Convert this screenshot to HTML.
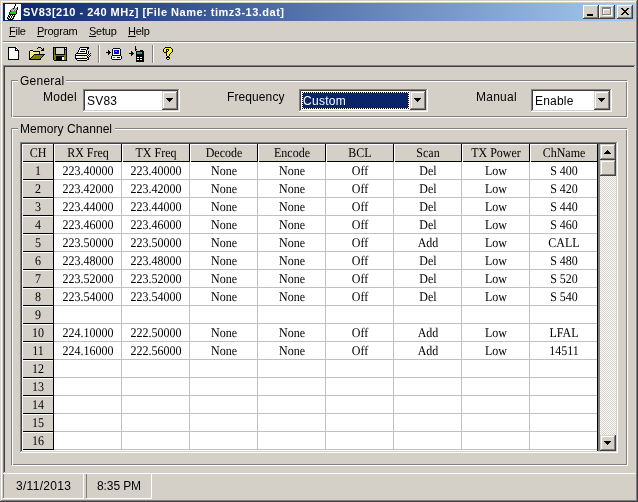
<!DOCTYPE html>
<html><head><meta charset="utf-8"><title>SV83</title><style>
html,body{margin:0;padding:0}
body{width:638px;height:502px;overflow:hidden;background:#D4D0C8;position:relative;font-family:"Liberation Sans",sans-serif}
.a{position:absolute;box-sizing:border-box}
.t{white-space:pre;-webkit-font-smoothing:antialiased;will-change:transform}
svg.a{overflow:visible}
</style></head><body>
<div class="a" style="left:0px;top:0px;width:638px;height:1px;background:#D4D0C8;"></div>
<div class="a" style="left:0px;top:0px;width:1px;height:502px;background:#D4D0C8;"></div>
<div class="a" style="left:1px;top:1px;width:636px;height:1px;background:#FFFFFF;"></div>
<div class="a" style="left:1px;top:1px;width:1px;height:500px;background:#FFFFFF;"></div>
<div class="a" style="left:0px;top:501px;width:638px;height:1px;background:#404040;"></div>
<div class="a" style="left:637px;top:0px;width:1px;height:502px;background:#404040;"></div>
<div class="a" style="left:1px;top:500px;width:636px;height:1px;background:#808080;"></div>
<div class="a" style="left:636px;top:1px;width:1px;height:500px;background:#808080;"></div>
<div class="a" style="left:3px;top:3px;width:632px;height:18px;background:linear-gradient(to right,#0A246A,#A6CAF0);"></div>
<div class="a t" style="left:23px;top:7px;font-family:'Liberation Sans',sans-serif;font-size:11px;line-height:11px;font-weight:bold;color:#fff;letter-spacing:0.5px">SV83[210 - 240 MHz] [File Name: timz3-13.dat]</div>
<div class="a" style="left:583px;top:5px;width:16px;height:14px;background:#D4D0C8;"></div>
<div class="a" style="left:583px;top:5px;width:16px;height:1px;background:#FFFFFF;"></div>
<div class="a" style="left:583px;top:5px;width:1px;height:14px;background:#FFFFFF;"></div>
<div class="a" style="left:584px;top:17px;width:14px;height:1px;background:#808080;"></div>
<div class="a" style="left:597px;top:6px;width:1px;height:12px;background:#808080;"></div>
<div class="a" style="left:583px;top:18px;width:16px;height:1px;background:#404040;"></div>
<div class="a" style="left:598px;top:5px;width:1px;height:14px;background:#404040;"></div>
<div class="a" style="left:599px;top:5px;width:16px;height:14px;background:#D4D0C8;"></div>
<div class="a" style="left:599px;top:5px;width:16px;height:1px;background:#FFFFFF;"></div>
<div class="a" style="left:599px;top:5px;width:1px;height:14px;background:#FFFFFF;"></div>
<div class="a" style="left:600px;top:17px;width:14px;height:1px;background:#808080;"></div>
<div class="a" style="left:613px;top:6px;width:1px;height:12px;background:#808080;"></div>
<div class="a" style="left:599px;top:18px;width:16px;height:1px;background:#404040;"></div>
<div class="a" style="left:614px;top:5px;width:1px;height:14px;background:#404040;"></div>
<div class="a" style="left:617px;top:5px;width:16px;height:14px;background:#D4D0C8;"></div>
<div class="a" style="left:617px;top:5px;width:16px;height:1px;background:#FFFFFF;"></div>
<div class="a" style="left:617px;top:5px;width:1px;height:14px;background:#FFFFFF;"></div>
<div class="a" style="left:618px;top:17px;width:14px;height:1px;background:#808080;"></div>
<div class="a" style="left:631px;top:6px;width:1px;height:12px;background:#808080;"></div>
<div class="a" style="left:617px;top:18px;width:16px;height:1px;background:#404040;"></div>
<div class="a" style="left:632px;top:5px;width:1px;height:14px;background:#404040;"></div>
<svg class="a" style="left:583px;top:5px" width="16" height="14" viewBox="0 0 16 14" shape-rendering="crispEdges"><rect x="4" y="9" width="6" height="2" fill="#000"/></svg>
<svg class="a" style="left:599px;top:5px" width="16" height="14" viewBox="0 0 16 14" shape-rendering="crispEdges"><path d="M4 3h9v8h-9z M5 5v5h7v-5z" fill="#fff" fill-rule="evenodd"/><path d="M3 2h9v8h-9z M4 4v5h7v-5z" fill="#808080" fill-rule="evenodd"/></svg>
<svg class="a" style="left:617px;top:5px" width="16" height="14" viewBox="0 0 16 14" shape-rendering="crispEdges"><path d="M4 3h2v1h1v1h2v-1h1v-1h2v1h-1v1h-1v1h-1v1h1v1h1v1h1v1h-2v-1h-1v-1h-2v1h-1v1h-2v-1h1v-1h1v-1h1v-1h-1v-1h-1v-1h-1z" fill="#000"/></svg>
<div class="a t" style="left:9px;top:26px;font-family:'Liberation Sans',sans-serif;font-size:11px;line-height:11px;font-weight:normal;color:#000;letter-spacing:-0.25px"><u>F</u>ile</div>
<div class="a t" style="left:37px;top:26px;font-family:'Liberation Sans',sans-serif;font-size:11px;line-height:11px;font-weight:normal;color:#000;letter-spacing:-0.25px"><u>P</u>rogram</div>
<div class="a t" style="left:89px;top:26px;font-family:'Liberation Sans',sans-serif;font-size:11px;line-height:11px;font-weight:normal;color:#000;letter-spacing:-0.25px"><u>S</u>etup</div>
<div class="a t" style="left:128px;top:26px;font-family:'Liberation Sans',sans-serif;font-size:11px;line-height:11px;font-weight:normal;color:#000;letter-spacing:-0.25px"><u>H</u>elp</div>
<div class="a" style="left:3px;top:41px;width:632px;height:1px;background:#808080;"></div>
<div class="a" style="left:3px;top:42px;width:632px;height:1px;background:#FFFFFF;"></div>
<div class="a" style="left:98px;top:45px;width:1px;height:18px;background:#808080;"></div>
<div class="a" style="left:99px;top:45px;width:1px;height:18px;background:#FFFFFF;"></div>
<div class="a" style="left:152px;top:45px;width:1px;height:18px;background:#808080;"></div>
<div class="a" style="left:153px;top:45px;width:1px;height:18px;background:#FFFFFF;"></div>
<div class="a" style="left:3px;top:65px;width:633px;height:1px;background:#808080;"></div>
<div class="a" style="left:3px;top:65px;width:1px;height:409px;background:#808080;"></div>
<div class="a" style="left:4px;top:66px;width:631px;height:1px;background:#404040;"></div>
<div class="a" style="left:4px;top:66px;width:1px;height:407px;background:#404040;"></div>
<div class="a" style="left:4px;top:472px;width:631px;height:1px;background:#D4D0C8;"></div>
<div class="a" style="left:634px;top:66px;width:1px;height:407px;background:#D4D0C8;"></div>
<div class="a" style="left:3px;top:473px;width:633px;height:1px;background:#FFFFFF;"></div>
<div class="a" style="left:635px;top:65px;width:1px;height:409px;background:#FFFFFF;"></div>
<div class="a" style="left:635px;top:65px;width:1px;height:409px;background:#D8D8D0;"></div>
<div class="a" style="left:11px;top:80px;width:616px;height:1px;background:#808080;"></div>
<div class="a" style="left:11px;top:80px;width:1px;height:37px;background:#808080;"></div>
<div class="a" style="left:11px;top:116px;width:616px;height:1px;background:#808080;"></div>
<div class="a" style="left:626px;top:80px;width:1px;height:37px;background:#808080;"></div>
<div class="a" style="left:12px;top:81px;width:616px;height:1px;background:#FFFFFF;"></div>
<div class="a" style="left:12px;top:81px;width:1px;height:37px;background:#FFFFFF;"></div>
<div class="a" style="left:12px;top:117px;width:616px;height:1px;background:#FFFFFF;"></div>
<div class="a" style="left:627px;top:81px;width:1px;height:37px;background:#FFFFFF;"></div>
<div class="a" style="left:18px;top:80px;width:48px;height:2px;background:#D4D0C8;"></div>
<div class="a" style="left:11px;top:80px;width:1px;height:37px;background:#808080;"></div>
<div class="a t" style="left:20px;top:75px;font-family:'Liberation Sans',sans-serif;font-size:12px;line-height:12px;font-weight:normal;color:#000;letter-spacing:0.25px">General</div>
<div class="a" style="left:11px;top:128px;width:616px;height:1px;background:#808080;"></div>
<div class="a" style="left:11px;top:128px;width:1px;height:337px;background:#808080;"></div>
<div class="a" style="left:11px;top:464px;width:616px;height:1px;background:#808080;"></div>
<div class="a" style="left:626px;top:128px;width:1px;height:337px;background:#808080;"></div>
<div class="a" style="left:12px;top:129px;width:616px;height:1px;background:#FFFFFF;"></div>
<div class="a" style="left:12px;top:129px;width:1px;height:337px;background:#FFFFFF;"></div>
<div class="a" style="left:12px;top:465px;width:616px;height:1px;background:#FFFFFF;"></div>
<div class="a" style="left:627px;top:129px;width:1px;height:337px;background:#FFFFFF;"></div>
<div class="a" style="left:18px;top:128px;width:97px;height:2px;background:#D4D0C8;"></div>
<div class="a" style="left:11px;top:128px;width:1px;height:337px;background:#808080;"></div>
<div class="a t" style="left:20px;top:123px;font-family:'Liberation Sans',sans-serif;font-size:12px;line-height:12px;font-weight:normal;color:#000;letter-spacing:0.05px">Memory Channel</div>
<div class="a t" style="left:43px;top:91px;font-family:'Liberation Sans',sans-serif;font-size:12px;line-height:12px;font-weight:normal;color:#000;letter-spacing:0.25px">Model</div>
<div class="a" style="left:83px;top:89px;width:97px;height:1px;background:#808080;"></div>
<div class="a" style="left:83px;top:89px;width:1px;height:23px;background:#808080;"></div>
<div class="a" style="left:84px;top:90px;width:95px;height:1px;background:#404040;"></div>
<div class="a" style="left:84px;top:90px;width:1px;height:21px;background:#404040;"></div>
<div class="a" style="left:84px;top:110px;width:95px;height:1px;background:#D4D0C8;"></div>
<div class="a" style="left:178px;top:90px;width:1px;height:21px;background:#D4D0C8;"></div>
<div class="a" style="left:83px;top:111px;width:97px;height:1px;background:#FFFFFF;"></div>
<div class="a" style="left:179px;top:89px;width:1px;height:23px;background:#FFFFFF;"></div>
<div class="a" style="left:85px;top:91px;width:93px;height:19px;background:#FFFFFF;"></div>
<div class="a" style="left:162px;top:91px;width:16px;height:19px;background:#D4D0C8;"></div>
<div class="a" style="left:162px;top:91px;width:16px;height:1px;background:#D4D0C8;"></div>
<div class="a" style="left:162px;top:91px;width:1px;height:19px;background:#D4D0C8;"></div>
<div class="a" style="left:163px;top:92px;width:14px;height:1px;background:#FFFFFF;"></div>
<div class="a" style="left:163px;top:92px;width:1px;height:17px;background:#FFFFFF;"></div>
<div class="a" style="left:163px;top:108px;width:14px;height:1px;background:#808080;"></div>
<div class="a" style="left:176px;top:92px;width:1px;height:17px;background:#808080;"></div>
<div class="a" style="left:162px;top:109px;width:16px;height:1px;background:#404040;"></div>
<div class="a" style="left:177px;top:91px;width:1px;height:19px;background:#404040;"></div>
<svg class="a" style="left:162px;top:91px" width="16" height="19" viewBox="0 0 16 19" shape-rendering="crispEdges"><path d="M4 7h7v1h-1v1h-1v1h-1v1h-1v-1h-1v-1h-1v-1h-1z" fill="#000"/></svg>
<div class="a t" style="left:87px;top:95px;font-family:'Liberation Sans',sans-serif;font-size:12px;line-height:12px;font-weight:normal;color:#000;letter-spacing:0.2px">SV83</div>
<div class="a t" style="left:227px;top:91px;font-family:'Liberation Sans',sans-serif;font-size:12px;line-height:12px;font-weight:normal;color:#000;letter-spacing:0.1px">Frequency</div>
<div class="a" style="left:299px;top:89px;width:129px;height:1px;background:#808080;"></div>
<div class="a" style="left:299px;top:89px;width:1px;height:23px;background:#808080;"></div>
<div class="a" style="left:300px;top:90px;width:127px;height:1px;background:#404040;"></div>
<div class="a" style="left:300px;top:90px;width:1px;height:21px;background:#404040;"></div>
<div class="a" style="left:300px;top:110px;width:127px;height:1px;background:#D4D0C8;"></div>
<div class="a" style="left:426px;top:90px;width:1px;height:21px;background:#D4D0C8;"></div>
<div class="a" style="left:299px;top:111px;width:129px;height:1px;background:#FFFFFF;"></div>
<div class="a" style="left:427px;top:89px;width:1px;height:23px;background:#FFFFFF;"></div>
<div class="a" style="left:301px;top:91px;width:125px;height:19px;background:#FFFFFF;"></div>
<div class="a" style="left:410px;top:91px;width:16px;height:19px;background:#D4D0C8;"></div>
<div class="a" style="left:410px;top:91px;width:16px;height:1px;background:#D4D0C8;"></div>
<div class="a" style="left:410px;top:91px;width:1px;height:19px;background:#D4D0C8;"></div>
<div class="a" style="left:411px;top:92px;width:14px;height:1px;background:#FFFFFF;"></div>
<div class="a" style="left:411px;top:92px;width:1px;height:17px;background:#FFFFFF;"></div>
<div class="a" style="left:411px;top:108px;width:14px;height:1px;background:#808080;"></div>
<div class="a" style="left:424px;top:92px;width:1px;height:17px;background:#808080;"></div>
<div class="a" style="left:410px;top:109px;width:16px;height:1px;background:#404040;"></div>
<div class="a" style="left:425px;top:91px;width:1px;height:19px;background:#404040;"></div>
<svg class="a" style="left:410px;top:91px" width="16" height="19" viewBox="0 0 16 19" shape-rendering="crispEdges"><path d="M4 7h7v1h-1v1h-1v1h-1v1h-1v-1h-1v-1h-1v-1h-1z" fill="#000"/></svg>
<div class="a" style="left:302px;top:92px;width:107px;height:17px;background:#0A246A;"></div>
<div class="a" style="left:302px;top:92px;width:107px;height:17px;border:1px solid #fff"></div>
<div class="a" style="left:302px;top:92px;width:107px;height:17px;border:1px dotted #000"></div>
<div class="a t" style="left:303px;top:95px;font-family:'Liberation Sans',sans-serif;font-size:12px;line-height:12px;font-weight:normal;color:#fff;letter-spacing:0.3px">Custom</div>
<div class="a t" style="left:476px;top:91px;font-family:'Liberation Sans',sans-serif;font-size:12px;line-height:12px;font-weight:normal;color:#000;letter-spacing:0.25px">Manual</div>
<div class="a" style="left:531px;top:89px;width:81px;height:1px;background:#808080;"></div>
<div class="a" style="left:531px;top:89px;width:1px;height:23px;background:#808080;"></div>
<div class="a" style="left:532px;top:90px;width:79px;height:1px;background:#404040;"></div>
<div class="a" style="left:532px;top:90px;width:1px;height:21px;background:#404040;"></div>
<div class="a" style="left:532px;top:110px;width:79px;height:1px;background:#D4D0C8;"></div>
<div class="a" style="left:610px;top:90px;width:1px;height:21px;background:#D4D0C8;"></div>
<div class="a" style="left:531px;top:111px;width:81px;height:1px;background:#FFFFFF;"></div>
<div class="a" style="left:611px;top:89px;width:1px;height:23px;background:#FFFFFF;"></div>
<div class="a" style="left:533px;top:91px;width:77px;height:19px;background:#FFFFFF;"></div>
<div class="a" style="left:594px;top:91px;width:16px;height:19px;background:#D4D0C8;"></div>
<div class="a" style="left:594px;top:91px;width:16px;height:1px;background:#D4D0C8;"></div>
<div class="a" style="left:594px;top:91px;width:1px;height:19px;background:#D4D0C8;"></div>
<div class="a" style="left:595px;top:92px;width:14px;height:1px;background:#FFFFFF;"></div>
<div class="a" style="left:595px;top:92px;width:1px;height:17px;background:#FFFFFF;"></div>
<div class="a" style="left:595px;top:108px;width:14px;height:1px;background:#808080;"></div>
<div class="a" style="left:608px;top:92px;width:1px;height:17px;background:#808080;"></div>
<div class="a" style="left:594px;top:109px;width:16px;height:1px;background:#404040;"></div>
<div class="a" style="left:609px;top:91px;width:1px;height:19px;background:#404040;"></div>
<svg class="a" style="left:594px;top:91px" width="16" height="19" viewBox="0 0 16 19" shape-rendering="crispEdges"><path d="M4 7h7v1h-1v1h-1v1h-1v1h-1v-1h-1v-1h-1v-1h-1z" fill="#000"/></svg>
<div class="a t" style="left:535px;top:95px;font-family:'Liberation Sans',sans-serif;font-size:12px;line-height:12px;font-weight:normal;color:#000;letter-spacing:0.2px">Enable</div>
<div class="a" style="left:20px;top:142px;width:598px;height:1px;background:#808080;"></div>
<div class="a" style="left:20px;top:142px;width:1px;height:311px;background:#808080;"></div>
<div class="a" style="left:21px;top:143px;width:596px;height:1px;background:#404040;"></div>
<div class="a" style="left:21px;top:143px;width:1px;height:309px;background:#404040;"></div>
<div class="a" style="left:21px;top:451px;width:596px;height:1px;background:#D4D0C8;"></div>
<div class="a" style="left:616px;top:143px;width:1px;height:309px;background:#D4D0C8;"></div>
<div class="a" style="left:20px;top:452px;width:598px;height:1px;background:#FFFFFF;"></div>
<div class="a" style="left:617px;top:142px;width:1px;height:311px;background:#FFFFFF;"></div>
<div class="a" style="left:22px;top:144px;width:594px;height:307px;background:#808080;"></div>
<div class="a" style="left:22px;top:450px;width:576px;height:1px;background:#FFFFFF;"></div>
<div class="a" style="left:22px;top:144px;width:32px;height:18px;background:#D4D0C8;"></div>
<div class="a" style="left:22px;top:144px;width:32px;height:1px;background:#FFFFFF;"></div>
<div class="a" style="left:22px;top:144px;width:1px;height:18px;background:#FFFFFF;"></div>
<div class="a" style="left:22px;top:161px;width:32px;height:1px;background:#000000;"></div>
<div class="a" style="left:53px;top:144px;width:1px;height:18px;background:#000000;"></div>
<div class="a" style="left:22px;top:161px;width:1px;height:1px;background:#FFFFFF;"></div>
<div class="a t" style="left:22px;top:147px;width:32px;text-align:center;font-family:'Liberation Serif',serif;font-size:12px;line-height:12px;color:#000;text-rendering:geometricPrecision;transform:scaleY(1.1);transform-origin:50% 10px">CH</div>
<div class="a" style="left:54px;top:144px;width:68px;height:18px;background:#D4D0C8;"></div>
<div class="a" style="left:54px;top:144px;width:68px;height:1px;background:#FFFFFF;"></div>
<div class="a" style="left:54px;top:144px;width:1px;height:18px;background:#FFFFFF;"></div>
<div class="a" style="left:54px;top:161px;width:68px;height:1px;background:#000000;"></div>
<div class="a" style="left:121px;top:144px;width:1px;height:18px;background:#000000;"></div>
<div class="a" style="left:54px;top:161px;width:1px;height:1px;background:#FFFFFF;"></div>
<div class="a t" style="left:54px;top:147px;width:68px;text-align:center;font-family:'Liberation Serif',serif;font-size:12px;line-height:12px;color:#000;text-rendering:geometricPrecision;transform:scaleY(1.1);transform-origin:50% 10px">RX Freq</div>
<div class="a" style="left:122px;top:144px;width:68px;height:18px;background:#D4D0C8;"></div>
<div class="a" style="left:122px;top:144px;width:68px;height:1px;background:#FFFFFF;"></div>
<div class="a" style="left:122px;top:144px;width:1px;height:18px;background:#FFFFFF;"></div>
<div class="a" style="left:122px;top:161px;width:68px;height:1px;background:#000000;"></div>
<div class="a" style="left:189px;top:144px;width:1px;height:18px;background:#000000;"></div>
<div class="a" style="left:122px;top:161px;width:1px;height:1px;background:#FFFFFF;"></div>
<div class="a t" style="left:122px;top:147px;width:68px;text-align:center;font-family:'Liberation Serif',serif;font-size:12px;line-height:12px;color:#000;text-rendering:geometricPrecision;transform:scaleY(1.1);transform-origin:50% 10px">TX Freq</div>
<div class="a" style="left:190px;top:144px;width:68px;height:18px;background:#D4D0C8;"></div>
<div class="a" style="left:190px;top:144px;width:68px;height:1px;background:#FFFFFF;"></div>
<div class="a" style="left:190px;top:144px;width:1px;height:18px;background:#FFFFFF;"></div>
<div class="a" style="left:190px;top:161px;width:68px;height:1px;background:#000000;"></div>
<div class="a" style="left:257px;top:144px;width:1px;height:18px;background:#000000;"></div>
<div class="a" style="left:190px;top:161px;width:1px;height:1px;background:#FFFFFF;"></div>
<div class="a t" style="left:190px;top:147px;width:68px;text-align:center;font-family:'Liberation Serif',serif;font-size:12px;line-height:12px;color:#000;text-rendering:geometricPrecision;transform:scaleY(1.1);transform-origin:50% 10px">Decode</div>
<div class="a" style="left:258px;top:144px;width:68px;height:18px;background:#D4D0C8;"></div>
<div class="a" style="left:258px;top:144px;width:68px;height:1px;background:#FFFFFF;"></div>
<div class="a" style="left:258px;top:144px;width:1px;height:18px;background:#FFFFFF;"></div>
<div class="a" style="left:258px;top:161px;width:68px;height:1px;background:#000000;"></div>
<div class="a" style="left:325px;top:144px;width:1px;height:18px;background:#000000;"></div>
<div class="a" style="left:258px;top:161px;width:1px;height:1px;background:#FFFFFF;"></div>
<div class="a t" style="left:258px;top:147px;width:68px;text-align:center;font-family:'Liberation Serif',serif;font-size:12px;line-height:12px;color:#000;text-rendering:geometricPrecision;transform:scaleY(1.1);transform-origin:50% 10px">Encode</div>
<div class="a" style="left:326px;top:144px;width:68px;height:18px;background:#D4D0C8;"></div>
<div class="a" style="left:326px;top:144px;width:68px;height:1px;background:#FFFFFF;"></div>
<div class="a" style="left:326px;top:144px;width:1px;height:18px;background:#FFFFFF;"></div>
<div class="a" style="left:326px;top:161px;width:68px;height:1px;background:#000000;"></div>
<div class="a" style="left:393px;top:144px;width:1px;height:18px;background:#000000;"></div>
<div class="a" style="left:326px;top:161px;width:1px;height:1px;background:#FFFFFF;"></div>
<div class="a t" style="left:326px;top:147px;width:68px;text-align:center;font-family:'Liberation Serif',serif;font-size:12px;line-height:12px;color:#000;text-rendering:geometricPrecision;transform:scaleY(1.1);transform-origin:50% 10px">BCL</div>
<div class="a" style="left:394px;top:144px;width:68px;height:18px;background:#D4D0C8;"></div>
<div class="a" style="left:394px;top:144px;width:68px;height:1px;background:#FFFFFF;"></div>
<div class="a" style="left:394px;top:144px;width:1px;height:18px;background:#FFFFFF;"></div>
<div class="a" style="left:394px;top:161px;width:68px;height:1px;background:#000000;"></div>
<div class="a" style="left:461px;top:144px;width:1px;height:18px;background:#000000;"></div>
<div class="a" style="left:394px;top:161px;width:1px;height:1px;background:#FFFFFF;"></div>
<div class="a t" style="left:394px;top:147px;width:68px;text-align:center;font-family:'Liberation Serif',serif;font-size:12px;line-height:12px;color:#000;text-rendering:geometricPrecision;transform:scaleY(1.1);transform-origin:50% 10px">Scan</div>
<div class="a" style="left:462px;top:144px;width:68px;height:18px;background:#D4D0C8;"></div>
<div class="a" style="left:462px;top:144px;width:68px;height:1px;background:#FFFFFF;"></div>
<div class="a" style="left:462px;top:144px;width:1px;height:18px;background:#FFFFFF;"></div>
<div class="a" style="left:462px;top:161px;width:68px;height:1px;background:#000000;"></div>
<div class="a" style="left:529px;top:144px;width:1px;height:18px;background:#000000;"></div>
<div class="a" style="left:462px;top:161px;width:1px;height:1px;background:#FFFFFF;"></div>
<div class="a t" style="left:462px;top:147px;width:68px;text-align:center;font-family:'Liberation Serif',serif;font-size:12px;line-height:12px;color:#000;text-rendering:geometricPrecision;transform:scaleY(1.1);transform-origin:50% 10px">TX Power</div>
<div class="a" style="left:530px;top:144px;width:68px;height:18px;background:#D4D0C8;"></div>
<div class="a" style="left:530px;top:144px;width:68px;height:1px;background:#FFFFFF;"></div>
<div class="a" style="left:530px;top:144px;width:1px;height:18px;background:#FFFFFF;"></div>
<div class="a" style="left:530px;top:161px;width:68px;height:1px;background:#000000;"></div>
<div class="a" style="left:597px;top:144px;width:1px;height:18px;background:#000000;"></div>
<div class="a" style="left:530px;top:161px;width:1px;height:1px;background:#FFFFFF;"></div>
<div class="a t" style="left:530px;top:147px;width:68px;text-align:center;font-family:'Liberation Serif',serif;font-size:12px;line-height:12px;color:#000;text-rendering:geometricPrecision;transform:scaleY(1.1);transform-origin:50% 10px">ChName</div>
<div class="a" style="left:54px;top:162px;width:544px;height:288px;background:#FFFFFF;"></div>
<div class="a" style="left:22px;top:162px;width:32px;height:18px;background:#D4D0C8;"></div>
<div class="a" style="left:22px;top:162px;width:32px;height:1px;background:#FFFFFF;"></div>
<div class="a" style="left:22px;top:162px;width:1px;height:18px;background:#FFFFFF;"></div>
<div class="a" style="left:22px;top:179px;width:32px;height:1px;background:#000000;"></div>
<div class="a" style="left:53px;top:162px;width:1px;height:18px;background:#000000;"></div>
<div class="a" style="left:22px;top:179px;width:1px;height:1px;background:#FFFFFF;"></div>
<div class="a t" style="left:22px;top:165px;width:32px;text-align:center;font-family:'Liberation Serif',serif;font-size:12px;line-height:12px;color:#000;text-rendering:geometricPrecision;transform:scaleY(1.1);transform-origin:50% 10px">1</div>
<div class="a" style="left:54px;top:179px;width:544px;height:1px;background:#C0C0C0;"></div>
<div class="a t" style="left:54px;top:165px;width:68px;text-align:center;font-family:'Liberation Serif',serif;font-size:12px;line-height:12px;color:#000;text-rendering:geometricPrecision;transform:scaleY(1.1);transform-origin:50% 10px">223.40000</div>
<div class="a t" style="left:122px;top:165px;width:68px;text-align:center;font-family:'Liberation Serif',serif;font-size:12px;line-height:12px;color:#000;text-rendering:geometricPrecision;transform:scaleY(1.1);transform-origin:50% 10px">223.40000</div>
<div class="a t" style="left:190px;top:165px;width:68px;text-align:center;font-family:'Liberation Serif',serif;font-size:12px;line-height:12px;color:#000;text-rendering:geometricPrecision;transform:scaleY(1.1);transform-origin:50% 10px">None</div>
<div class="a t" style="left:258px;top:165px;width:68px;text-align:center;font-family:'Liberation Serif',serif;font-size:12px;line-height:12px;color:#000;text-rendering:geometricPrecision;transform:scaleY(1.1);transform-origin:50% 10px">None</div>
<div class="a t" style="left:326px;top:165px;width:68px;text-align:center;font-family:'Liberation Serif',serif;font-size:12px;line-height:12px;color:#000;text-rendering:geometricPrecision;transform:scaleY(1.1);transform-origin:50% 10px">Off</div>
<div class="a t" style="left:394px;top:165px;width:68px;text-align:center;font-family:'Liberation Serif',serif;font-size:12px;line-height:12px;color:#000;text-rendering:geometricPrecision;transform:scaleY(1.1);transform-origin:50% 10px">Del</div>
<div class="a t" style="left:462px;top:165px;width:68px;text-align:center;font-family:'Liberation Serif',serif;font-size:12px;line-height:12px;color:#000;text-rendering:geometricPrecision;transform:scaleY(1.1);transform-origin:50% 10px">Low</div>
<div class="a t" style="left:530px;top:165px;width:68px;text-align:center;font-family:'Liberation Serif',serif;font-size:12px;line-height:12px;color:#000;text-rendering:geometricPrecision;transform:scaleY(1.1);transform-origin:50% 10px">S 400</div>
<div class="a" style="left:22px;top:180px;width:32px;height:18px;background:#D4D0C8;"></div>
<div class="a" style="left:22px;top:180px;width:32px;height:1px;background:#FFFFFF;"></div>
<div class="a" style="left:22px;top:180px;width:1px;height:18px;background:#FFFFFF;"></div>
<div class="a" style="left:22px;top:197px;width:32px;height:1px;background:#000000;"></div>
<div class="a" style="left:53px;top:180px;width:1px;height:18px;background:#000000;"></div>
<div class="a" style="left:22px;top:197px;width:1px;height:1px;background:#FFFFFF;"></div>
<div class="a t" style="left:22px;top:183px;width:32px;text-align:center;font-family:'Liberation Serif',serif;font-size:12px;line-height:12px;color:#000;text-rendering:geometricPrecision;transform:scaleY(1.1);transform-origin:50% 10px">2</div>
<div class="a" style="left:54px;top:197px;width:544px;height:1px;background:#C0C0C0;"></div>
<div class="a t" style="left:54px;top:183px;width:68px;text-align:center;font-family:'Liberation Serif',serif;font-size:12px;line-height:12px;color:#000;text-rendering:geometricPrecision;transform:scaleY(1.1);transform-origin:50% 10px">223.42000</div>
<div class="a t" style="left:122px;top:183px;width:68px;text-align:center;font-family:'Liberation Serif',serif;font-size:12px;line-height:12px;color:#000;text-rendering:geometricPrecision;transform:scaleY(1.1);transform-origin:50% 10px">223.42000</div>
<div class="a t" style="left:190px;top:183px;width:68px;text-align:center;font-family:'Liberation Serif',serif;font-size:12px;line-height:12px;color:#000;text-rendering:geometricPrecision;transform:scaleY(1.1);transform-origin:50% 10px">None</div>
<div class="a t" style="left:258px;top:183px;width:68px;text-align:center;font-family:'Liberation Serif',serif;font-size:12px;line-height:12px;color:#000;text-rendering:geometricPrecision;transform:scaleY(1.1);transform-origin:50% 10px">None</div>
<div class="a t" style="left:326px;top:183px;width:68px;text-align:center;font-family:'Liberation Serif',serif;font-size:12px;line-height:12px;color:#000;text-rendering:geometricPrecision;transform:scaleY(1.1);transform-origin:50% 10px">Off</div>
<div class="a t" style="left:394px;top:183px;width:68px;text-align:center;font-family:'Liberation Serif',serif;font-size:12px;line-height:12px;color:#000;text-rendering:geometricPrecision;transform:scaleY(1.1);transform-origin:50% 10px">Del</div>
<div class="a t" style="left:462px;top:183px;width:68px;text-align:center;font-family:'Liberation Serif',serif;font-size:12px;line-height:12px;color:#000;text-rendering:geometricPrecision;transform:scaleY(1.1);transform-origin:50% 10px">Low</div>
<div class="a t" style="left:530px;top:183px;width:68px;text-align:center;font-family:'Liberation Serif',serif;font-size:12px;line-height:12px;color:#000;text-rendering:geometricPrecision;transform:scaleY(1.1);transform-origin:50% 10px">S 420</div>
<div class="a" style="left:22px;top:198px;width:32px;height:18px;background:#D4D0C8;"></div>
<div class="a" style="left:22px;top:198px;width:32px;height:1px;background:#FFFFFF;"></div>
<div class="a" style="left:22px;top:198px;width:1px;height:18px;background:#FFFFFF;"></div>
<div class="a" style="left:22px;top:215px;width:32px;height:1px;background:#000000;"></div>
<div class="a" style="left:53px;top:198px;width:1px;height:18px;background:#000000;"></div>
<div class="a" style="left:22px;top:215px;width:1px;height:1px;background:#FFFFFF;"></div>
<div class="a t" style="left:22px;top:201px;width:32px;text-align:center;font-family:'Liberation Serif',serif;font-size:12px;line-height:12px;color:#000;text-rendering:geometricPrecision;transform:scaleY(1.1);transform-origin:50% 10px">3</div>
<div class="a" style="left:54px;top:215px;width:544px;height:1px;background:#C0C0C0;"></div>
<div class="a t" style="left:54px;top:201px;width:68px;text-align:center;font-family:'Liberation Serif',serif;font-size:12px;line-height:12px;color:#000;text-rendering:geometricPrecision;transform:scaleY(1.1);transform-origin:50% 10px">223.44000</div>
<div class="a t" style="left:122px;top:201px;width:68px;text-align:center;font-family:'Liberation Serif',serif;font-size:12px;line-height:12px;color:#000;text-rendering:geometricPrecision;transform:scaleY(1.1);transform-origin:50% 10px">223.44000</div>
<div class="a t" style="left:190px;top:201px;width:68px;text-align:center;font-family:'Liberation Serif',serif;font-size:12px;line-height:12px;color:#000;text-rendering:geometricPrecision;transform:scaleY(1.1);transform-origin:50% 10px">None</div>
<div class="a t" style="left:258px;top:201px;width:68px;text-align:center;font-family:'Liberation Serif',serif;font-size:12px;line-height:12px;color:#000;text-rendering:geometricPrecision;transform:scaleY(1.1);transform-origin:50% 10px">None</div>
<div class="a t" style="left:326px;top:201px;width:68px;text-align:center;font-family:'Liberation Serif',serif;font-size:12px;line-height:12px;color:#000;text-rendering:geometricPrecision;transform:scaleY(1.1);transform-origin:50% 10px">Off</div>
<div class="a t" style="left:394px;top:201px;width:68px;text-align:center;font-family:'Liberation Serif',serif;font-size:12px;line-height:12px;color:#000;text-rendering:geometricPrecision;transform:scaleY(1.1);transform-origin:50% 10px">Del</div>
<div class="a t" style="left:462px;top:201px;width:68px;text-align:center;font-family:'Liberation Serif',serif;font-size:12px;line-height:12px;color:#000;text-rendering:geometricPrecision;transform:scaleY(1.1);transform-origin:50% 10px">Low</div>
<div class="a t" style="left:530px;top:201px;width:68px;text-align:center;font-family:'Liberation Serif',serif;font-size:12px;line-height:12px;color:#000;text-rendering:geometricPrecision;transform:scaleY(1.1);transform-origin:50% 10px">S 440</div>
<div class="a" style="left:22px;top:216px;width:32px;height:18px;background:#D4D0C8;"></div>
<div class="a" style="left:22px;top:216px;width:32px;height:1px;background:#FFFFFF;"></div>
<div class="a" style="left:22px;top:216px;width:1px;height:18px;background:#FFFFFF;"></div>
<div class="a" style="left:22px;top:233px;width:32px;height:1px;background:#000000;"></div>
<div class="a" style="left:53px;top:216px;width:1px;height:18px;background:#000000;"></div>
<div class="a" style="left:22px;top:233px;width:1px;height:1px;background:#FFFFFF;"></div>
<div class="a t" style="left:22px;top:219px;width:32px;text-align:center;font-family:'Liberation Serif',serif;font-size:12px;line-height:12px;color:#000;text-rendering:geometricPrecision;transform:scaleY(1.1);transform-origin:50% 10px">4</div>
<div class="a" style="left:54px;top:233px;width:544px;height:1px;background:#C0C0C0;"></div>
<div class="a t" style="left:54px;top:219px;width:68px;text-align:center;font-family:'Liberation Serif',serif;font-size:12px;line-height:12px;color:#000;text-rendering:geometricPrecision;transform:scaleY(1.1);transform-origin:50% 10px">223.46000</div>
<div class="a t" style="left:122px;top:219px;width:68px;text-align:center;font-family:'Liberation Serif',serif;font-size:12px;line-height:12px;color:#000;text-rendering:geometricPrecision;transform:scaleY(1.1);transform-origin:50% 10px">223.46000</div>
<div class="a t" style="left:190px;top:219px;width:68px;text-align:center;font-family:'Liberation Serif',serif;font-size:12px;line-height:12px;color:#000;text-rendering:geometricPrecision;transform:scaleY(1.1);transform-origin:50% 10px">None</div>
<div class="a t" style="left:258px;top:219px;width:68px;text-align:center;font-family:'Liberation Serif',serif;font-size:12px;line-height:12px;color:#000;text-rendering:geometricPrecision;transform:scaleY(1.1);transform-origin:50% 10px">None</div>
<div class="a t" style="left:326px;top:219px;width:68px;text-align:center;font-family:'Liberation Serif',serif;font-size:12px;line-height:12px;color:#000;text-rendering:geometricPrecision;transform:scaleY(1.1);transform-origin:50% 10px">Off</div>
<div class="a t" style="left:394px;top:219px;width:68px;text-align:center;font-family:'Liberation Serif',serif;font-size:12px;line-height:12px;color:#000;text-rendering:geometricPrecision;transform:scaleY(1.1);transform-origin:50% 10px">Del</div>
<div class="a t" style="left:462px;top:219px;width:68px;text-align:center;font-family:'Liberation Serif',serif;font-size:12px;line-height:12px;color:#000;text-rendering:geometricPrecision;transform:scaleY(1.1);transform-origin:50% 10px">Low</div>
<div class="a t" style="left:530px;top:219px;width:68px;text-align:center;font-family:'Liberation Serif',serif;font-size:12px;line-height:12px;color:#000;text-rendering:geometricPrecision;transform:scaleY(1.1);transform-origin:50% 10px">S 460</div>
<div class="a" style="left:22px;top:234px;width:32px;height:18px;background:#D4D0C8;"></div>
<div class="a" style="left:22px;top:234px;width:32px;height:1px;background:#FFFFFF;"></div>
<div class="a" style="left:22px;top:234px;width:1px;height:18px;background:#FFFFFF;"></div>
<div class="a" style="left:22px;top:251px;width:32px;height:1px;background:#000000;"></div>
<div class="a" style="left:53px;top:234px;width:1px;height:18px;background:#000000;"></div>
<div class="a" style="left:22px;top:251px;width:1px;height:1px;background:#FFFFFF;"></div>
<div class="a t" style="left:22px;top:237px;width:32px;text-align:center;font-family:'Liberation Serif',serif;font-size:12px;line-height:12px;color:#000;text-rendering:geometricPrecision;transform:scaleY(1.1);transform-origin:50% 10px">5</div>
<div class="a" style="left:54px;top:251px;width:544px;height:1px;background:#C0C0C0;"></div>
<div class="a t" style="left:54px;top:237px;width:68px;text-align:center;font-family:'Liberation Serif',serif;font-size:12px;line-height:12px;color:#000;text-rendering:geometricPrecision;transform:scaleY(1.1);transform-origin:50% 10px">223.50000</div>
<div class="a t" style="left:122px;top:237px;width:68px;text-align:center;font-family:'Liberation Serif',serif;font-size:12px;line-height:12px;color:#000;text-rendering:geometricPrecision;transform:scaleY(1.1);transform-origin:50% 10px">223.50000</div>
<div class="a t" style="left:190px;top:237px;width:68px;text-align:center;font-family:'Liberation Serif',serif;font-size:12px;line-height:12px;color:#000;text-rendering:geometricPrecision;transform:scaleY(1.1);transform-origin:50% 10px">None</div>
<div class="a t" style="left:258px;top:237px;width:68px;text-align:center;font-family:'Liberation Serif',serif;font-size:12px;line-height:12px;color:#000;text-rendering:geometricPrecision;transform:scaleY(1.1);transform-origin:50% 10px">None</div>
<div class="a t" style="left:326px;top:237px;width:68px;text-align:center;font-family:'Liberation Serif',serif;font-size:12px;line-height:12px;color:#000;text-rendering:geometricPrecision;transform:scaleY(1.1);transform-origin:50% 10px">Off</div>
<div class="a t" style="left:394px;top:237px;width:68px;text-align:center;font-family:'Liberation Serif',serif;font-size:12px;line-height:12px;color:#000;text-rendering:geometricPrecision;transform:scaleY(1.1);transform-origin:50% 10px">Add</div>
<div class="a t" style="left:462px;top:237px;width:68px;text-align:center;font-family:'Liberation Serif',serif;font-size:12px;line-height:12px;color:#000;text-rendering:geometricPrecision;transform:scaleY(1.1);transform-origin:50% 10px">Low</div>
<div class="a t" style="left:530px;top:237px;width:68px;text-align:center;font-family:'Liberation Serif',serif;font-size:12px;line-height:12px;color:#000;text-rendering:geometricPrecision;transform:scaleY(1.1);transform-origin:50% 10px">CALL</div>
<div class="a" style="left:22px;top:252px;width:32px;height:18px;background:#D4D0C8;"></div>
<div class="a" style="left:22px;top:252px;width:32px;height:1px;background:#FFFFFF;"></div>
<div class="a" style="left:22px;top:252px;width:1px;height:18px;background:#FFFFFF;"></div>
<div class="a" style="left:22px;top:269px;width:32px;height:1px;background:#000000;"></div>
<div class="a" style="left:53px;top:252px;width:1px;height:18px;background:#000000;"></div>
<div class="a" style="left:22px;top:269px;width:1px;height:1px;background:#FFFFFF;"></div>
<div class="a t" style="left:22px;top:255px;width:32px;text-align:center;font-family:'Liberation Serif',serif;font-size:12px;line-height:12px;color:#000;text-rendering:geometricPrecision;transform:scaleY(1.1);transform-origin:50% 10px">6</div>
<div class="a" style="left:54px;top:269px;width:544px;height:1px;background:#C0C0C0;"></div>
<div class="a t" style="left:54px;top:255px;width:68px;text-align:center;font-family:'Liberation Serif',serif;font-size:12px;line-height:12px;color:#000;text-rendering:geometricPrecision;transform:scaleY(1.1);transform-origin:50% 10px">223.48000</div>
<div class="a t" style="left:122px;top:255px;width:68px;text-align:center;font-family:'Liberation Serif',serif;font-size:12px;line-height:12px;color:#000;text-rendering:geometricPrecision;transform:scaleY(1.1);transform-origin:50% 10px">223.48000</div>
<div class="a t" style="left:190px;top:255px;width:68px;text-align:center;font-family:'Liberation Serif',serif;font-size:12px;line-height:12px;color:#000;text-rendering:geometricPrecision;transform:scaleY(1.1);transform-origin:50% 10px">None</div>
<div class="a t" style="left:258px;top:255px;width:68px;text-align:center;font-family:'Liberation Serif',serif;font-size:12px;line-height:12px;color:#000;text-rendering:geometricPrecision;transform:scaleY(1.1);transform-origin:50% 10px">None</div>
<div class="a t" style="left:326px;top:255px;width:68px;text-align:center;font-family:'Liberation Serif',serif;font-size:12px;line-height:12px;color:#000;text-rendering:geometricPrecision;transform:scaleY(1.1);transform-origin:50% 10px">Off</div>
<div class="a t" style="left:394px;top:255px;width:68px;text-align:center;font-family:'Liberation Serif',serif;font-size:12px;line-height:12px;color:#000;text-rendering:geometricPrecision;transform:scaleY(1.1);transform-origin:50% 10px">Del</div>
<div class="a t" style="left:462px;top:255px;width:68px;text-align:center;font-family:'Liberation Serif',serif;font-size:12px;line-height:12px;color:#000;text-rendering:geometricPrecision;transform:scaleY(1.1);transform-origin:50% 10px">Low</div>
<div class="a t" style="left:530px;top:255px;width:68px;text-align:center;font-family:'Liberation Serif',serif;font-size:12px;line-height:12px;color:#000;text-rendering:geometricPrecision;transform:scaleY(1.1);transform-origin:50% 10px">S 480</div>
<div class="a" style="left:22px;top:270px;width:32px;height:18px;background:#D4D0C8;"></div>
<div class="a" style="left:22px;top:270px;width:32px;height:1px;background:#FFFFFF;"></div>
<div class="a" style="left:22px;top:270px;width:1px;height:18px;background:#FFFFFF;"></div>
<div class="a" style="left:22px;top:287px;width:32px;height:1px;background:#000000;"></div>
<div class="a" style="left:53px;top:270px;width:1px;height:18px;background:#000000;"></div>
<div class="a" style="left:22px;top:287px;width:1px;height:1px;background:#FFFFFF;"></div>
<div class="a t" style="left:22px;top:273px;width:32px;text-align:center;font-family:'Liberation Serif',serif;font-size:12px;line-height:12px;color:#000;text-rendering:geometricPrecision;transform:scaleY(1.1);transform-origin:50% 10px">7</div>
<div class="a" style="left:54px;top:287px;width:544px;height:1px;background:#C0C0C0;"></div>
<div class="a t" style="left:54px;top:273px;width:68px;text-align:center;font-family:'Liberation Serif',serif;font-size:12px;line-height:12px;color:#000;text-rendering:geometricPrecision;transform:scaleY(1.1);transform-origin:50% 10px">223.52000</div>
<div class="a t" style="left:122px;top:273px;width:68px;text-align:center;font-family:'Liberation Serif',serif;font-size:12px;line-height:12px;color:#000;text-rendering:geometricPrecision;transform:scaleY(1.1);transform-origin:50% 10px">223.52000</div>
<div class="a t" style="left:190px;top:273px;width:68px;text-align:center;font-family:'Liberation Serif',serif;font-size:12px;line-height:12px;color:#000;text-rendering:geometricPrecision;transform:scaleY(1.1);transform-origin:50% 10px">None</div>
<div class="a t" style="left:258px;top:273px;width:68px;text-align:center;font-family:'Liberation Serif',serif;font-size:12px;line-height:12px;color:#000;text-rendering:geometricPrecision;transform:scaleY(1.1);transform-origin:50% 10px">None</div>
<div class="a t" style="left:326px;top:273px;width:68px;text-align:center;font-family:'Liberation Serif',serif;font-size:12px;line-height:12px;color:#000;text-rendering:geometricPrecision;transform:scaleY(1.1);transform-origin:50% 10px">Off</div>
<div class="a t" style="left:394px;top:273px;width:68px;text-align:center;font-family:'Liberation Serif',serif;font-size:12px;line-height:12px;color:#000;text-rendering:geometricPrecision;transform:scaleY(1.1);transform-origin:50% 10px">Del</div>
<div class="a t" style="left:462px;top:273px;width:68px;text-align:center;font-family:'Liberation Serif',serif;font-size:12px;line-height:12px;color:#000;text-rendering:geometricPrecision;transform:scaleY(1.1);transform-origin:50% 10px">Low</div>
<div class="a t" style="left:530px;top:273px;width:68px;text-align:center;font-family:'Liberation Serif',serif;font-size:12px;line-height:12px;color:#000;text-rendering:geometricPrecision;transform:scaleY(1.1);transform-origin:50% 10px">S 520</div>
<div class="a" style="left:22px;top:288px;width:32px;height:18px;background:#D4D0C8;"></div>
<div class="a" style="left:22px;top:288px;width:32px;height:1px;background:#FFFFFF;"></div>
<div class="a" style="left:22px;top:288px;width:1px;height:18px;background:#FFFFFF;"></div>
<div class="a" style="left:22px;top:305px;width:32px;height:1px;background:#000000;"></div>
<div class="a" style="left:53px;top:288px;width:1px;height:18px;background:#000000;"></div>
<div class="a" style="left:22px;top:305px;width:1px;height:1px;background:#FFFFFF;"></div>
<div class="a t" style="left:22px;top:291px;width:32px;text-align:center;font-family:'Liberation Serif',serif;font-size:12px;line-height:12px;color:#000;text-rendering:geometricPrecision;transform:scaleY(1.1);transform-origin:50% 10px">8</div>
<div class="a" style="left:54px;top:305px;width:544px;height:1px;background:#C0C0C0;"></div>
<div class="a t" style="left:54px;top:291px;width:68px;text-align:center;font-family:'Liberation Serif',serif;font-size:12px;line-height:12px;color:#000;text-rendering:geometricPrecision;transform:scaleY(1.1);transform-origin:50% 10px">223.54000</div>
<div class="a t" style="left:122px;top:291px;width:68px;text-align:center;font-family:'Liberation Serif',serif;font-size:12px;line-height:12px;color:#000;text-rendering:geometricPrecision;transform:scaleY(1.1);transform-origin:50% 10px">223.54000</div>
<div class="a t" style="left:190px;top:291px;width:68px;text-align:center;font-family:'Liberation Serif',serif;font-size:12px;line-height:12px;color:#000;text-rendering:geometricPrecision;transform:scaleY(1.1);transform-origin:50% 10px">None</div>
<div class="a t" style="left:258px;top:291px;width:68px;text-align:center;font-family:'Liberation Serif',serif;font-size:12px;line-height:12px;color:#000;text-rendering:geometricPrecision;transform:scaleY(1.1);transform-origin:50% 10px">None</div>
<div class="a t" style="left:326px;top:291px;width:68px;text-align:center;font-family:'Liberation Serif',serif;font-size:12px;line-height:12px;color:#000;text-rendering:geometricPrecision;transform:scaleY(1.1);transform-origin:50% 10px">Off</div>
<div class="a t" style="left:394px;top:291px;width:68px;text-align:center;font-family:'Liberation Serif',serif;font-size:12px;line-height:12px;color:#000;text-rendering:geometricPrecision;transform:scaleY(1.1);transform-origin:50% 10px">Del</div>
<div class="a t" style="left:462px;top:291px;width:68px;text-align:center;font-family:'Liberation Serif',serif;font-size:12px;line-height:12px;color:#000;text-rendering:geometricPrecision;transform:scaleY(1.1);transform-origin:50% 10px">Low</div>
<div class="a t" style="left:530px;top:291px;width:68px;text-align:center;font-family:'Liberation Serif',serif;font-size:12px;line-height:12px;color:#000;text-rendering:geometricPrecision;transform:scaleY(1.1);transform-origin:50% 10px">S 540</div>
<div class="a" style="left:22px;top:306px;width:32px;height:18px;background:#D4D0C8;"></div>
<div class="a" style="left:22px;top:306px;width:32px;height:1px;background:#FFFFFF;"></div>
<div class="a" style="left:22px;top:306px;width:1px;height:18px;background:#FFFFFF;"></div>
<div class="a" style="left:22px;top:323px;width:32px;height:1px;background:#000000;"></div>
<div class="a" style="left:53px;top:306px;width:1px;height:18px;background:#000000;"></div>
<div class="a" style="left:22px;top:323px;width:1px;height:1px;background:#FFFFFF;"></div>
<div class="a t" style="left:22px;top:309px;width:32px;text-align:center;font-family:'Liberation Serif',serif;font-size:12px;line-height:12px;color:#000;text-rendering:geometricPrecision;transform:scaleY(1.1);transform-origin:50% 10px">9</div>
<div class="a" style="left:54px;top:323px;width:544px;height:1px;background:#C0C0C0;"></div>
<div class="a" style="left:22px;top:324px;width:32px;height:18px;background:#D4D0C8;"></div>
<div class="a" style="left:22px;top:324px;width:32px;height:1px;background:#FFFFFF;"></div>
<div class="a" style="left:22px;top:324px;width:1px;height:18px;background:#FFFFFF;"></div>
<div class="a" style="left:22px;top:341px;width:32px;height:1px;background:#000000;"></div>
<div class="a" style="left:53px;top:324px;width:1px;height:18px;background:#000000;"></div>
<div class="a" style="left:22px;top:341px;width:1px;height:1px;background:#FFFFFF;"></div>
<div class="a t" style="left:22px;top:327px;width:32px;text-align:center;font-family:'Liberation Serif',serif;font-size:12px;line-height:12px;color:#000;text-rendering:geometricPrecision;transform:scaleY(1.1);transform-origin:50% 10px">10</div>
<div class="a" style="left:54px;top:341px;width:544px;height:1px;background:#C0C0C0;"></div>
<div class="a t" style="left:54px;top:327px;width:68px;text-align:center;font-family:'Liberation Serif',serif;font-size:12px;line-height:12px;color:#000;text-rendering:geometricPrecision;transform:scaleY(1.1);transform-origin:50% 10px">224.10000</div>
<div class="a t" style="left:122px;top:327px;width:68px;text-align:center;font-family:'Liberation Serif',serif;font-size:12px;line-height:12px;color:#000;text-rendering:geometricPrecision;transform:scaleY(1.1);transform-origin:50% 10px">222.50000</div>
<div class="a t" style="left:190px;top:327px;width:68px;text-align:center;font-family:'Liberation Serif',serif;font-size:12px;line-height:12px;color:#000;text-rendering:geometricPrecision;transform:scaleY(1.1);transform-origin:50% 10px">None</div>
<div class="a t" style="left:258px;top:327px;width:68px;text-align:center;font-family:'Liberation Serif',serif;font-size:12px;line-height:12px;color:#000;text-rendering:geometricPrecision;transform:scaleY(1.1);transform-origin:50% 10px">None</div>
<div class="a t" style="left:326px;top:327px;width:68px;text-align:center;font-family:'Liberation Serif',serif;font-size:12px;line-height:12px;color:#000;text-rendering:geometricPrecision;transform:scaleY(1.1);transform-origin:50% 10px">Off</div>
<div class="a t" style="left:394px;top:327px;width:68px;text-align:center;font-family:'Liberation Serif',serif;font-size:12px;line-height:12px;color:#000;text-rendering:geometricPrecision;transform:scaleY(1.1);transform-origin:50% 10px">Add</div>
<div class="a t" style="left:462px;top:327px;width:68px;text-align:center;font-family:'Liberation Serif',serif;font-size:12px;line-height:12px;color:#000;text-rendering:geometricPrecision;transform:scaleY(1.1);transform-origin:50% 10px">Low</div>
<div class="a t" style="left:530px;top:327px;width:68px;text-align:center;font-family:'Liberation Serif',serif;font-size:12px;line-height:12px;color:#000;text-rendering:geometricPrecision;transform:scaleY(1.1);transform-origin:50% 10px">LFAL</div>
<div class="a" style="left:22px;top:342px;width:32px;height:18px;background:#D4D0C8;"></div>
<div class="a" style="left:22px;top:342px;width:32px;height:1px;background:#FFFFFF;"></div>
<div class="a" style="left:22px;top:342px;width:1px;height:18px;background:#FFFFFF;"></div>
<div class="a" style="left:22px;top:359px;width:32px;height:1px;background:#000000;"></div>
<div class="a" style="left:53px;top:342px;width:1px;height:18px;background:#000000;"></div>
<div class="a" style="left:22px;top:359px;width:1px;height:1px;background:#FFFFFF;"></div>
<div class="a t" style="left:22px;top:345px;width:32px;text-align:center;font-family:'Liberation Serif',serif;font-size:12px;line-height:12px;color:#000;text-rendering:geometricPrecision;transform:scaleY(1.1);transform-origin:50% 10px">11</div>
<div class="a" style="left:54px;top:359px;width:544px;height:1px;background:#C0C0C0;"></div>
<div class="a t" style="left:54px;top:345px;width:68px;text-align:center;font-family:'Liberation Serif',serif;font-size:12px;line-height:12px;color:#000;text-rendering:geometricPrecision;transform:scaleY(1.1);transform-origin:50% 10px">224.16000</div>
<div class="a t" style="left:122px;top:345px;width:68px;text-align:center;font-family:'Liberation Serif',serif;font-size:12px;line-height:12px;color:#000;text-rendering:geometricPrecision;transform:scaleY(1.1);transform-origin:50% 10px">222.56000</div>
<div class="a t" style="left:190px;top:345px;width:68px;text-align:center;font-family:'Liberation Serif',serif;font-size:12px;line-height:12px;color:#000;text-rendering:geometricPrecision;transform:scaleY(1.1);transform-origin:50% 10px">None</div>
<div class="a t" style="left:258px;top:345px;width:68px;text-align:center;font-family:'Liberation Serif',serif;font-size:12px;line-height:12px;color:#000;text-rendering:geometricPrecision;transform:scaleY(1.1);transform-origin:50% 10px">None</div>
<div class="a t" style="left:326px;top:345px;width:68px;text-align:center;font-family:'Liberation Serif',serif;font-size:12px;line-height:12px;color:#000;text-rendering:geometricPrecision;transform:scaleY(1.1);transform-origin:50% 10px">Off</div>
<div class="a t" style="left:394px;top:345px;width:68px;text-align:center;font-family:'Liberation Serif',serif;font-size:12px;line-height:12px;color:#000;text-rendering:geometricPrecision;transform:scaleY(1.1);transform-origin:50% 10px">Add</div>
<div class="a t" style="left:462px;top:345px;width:68px;text-align:center;font-family:'Liberation Serif',serif;font-size:12px;line-height:12px;color:#000;text-rendering:geometricPrecision;transform:scaleY(1.1);transform-origin:50% 10px">Low</div>
<div class="a t" style="left:530px;top:345px;width:68px;text-align:center;font-family:'Liberation Serif',serif;font-size:12px;line-height:12px;color:#000;text-rendering:geometricPrecision;transform:scaleY(1.1);transform-origin:50% 10px">14511</div>
<div class="a" style="left:22px;top:360px;width:32px;height:18px;background:#D4D0C8;"></div>
<div class="a" style="left:22px;top:360px;width:32px;height:1px;background:#FFFFFF;"></div>
<div class="a" style="left:22px;top:360px;width:1px;height:18px;background:#FFFFFF;"></div>
<div class="a" style="left:22px;top:377px;width:32px;height:1px;background:#000000;"></div>
<div class="a" style="left:53px;top:360px;width:1px;height:18px;background:#000000;"></div>
<div class="a" style="left:22px;top:377px;width:1px;height:1px;background:#FFFFFF;"></div>
<div class="a t" style="left:22px;top:363px;width:32px;text-align:center;font-family:'Liberation Serif',serif;font-size:12px;line-height:12px;color:#000;text-rendering:geometricPrecision;transform:scaleY(1.1);transform-origin:50% 10px">12</div>
<div class="a" style="left:54px;top:377px;width:544px;height:1px;background:#C0C0C0;"></div>
<div class="a" style="left:22px;top:378px;width:32px;height:18px;background:#D4D0C8;"></div>
<div class="a" style="left:22px;top:378px;width:32px;height:1px;background:#FFFFFF;"></div>
<div class="a" style="left:22px;top:378px;width:1px;height:18px;background:#FFFFFF;"></div>
<div class="a" style="left:22px;top:395px;width:32px;height:1px;background:#000000;"></div>
<div class="a" style="left:53px;top:378px;width:1px;height:18px;background:#000000;"></div>
<div class="a" style="left:22px;top:395px;width:1px;height:1px;background:#FFFFFF;"></div>
<div class="a t" style="left:22px;top:381px;width:32px;text-align:center;font-family:'Liberation Serif',serif;font-size:12px;line-height:12px;color:#000;text-rendering:geometricPrecision;transform:scaleY(1.1);transform-origin:50% 10px">13</div>
<div class="a" style="left:54px;top:395px;width:544px;height:1px;background:#C0C0C0;"></div>
<div class="a" style="left:22px;top:396px;width:32px;height:18px;background:#D4D0C8;"></div>
<div class="a" style="left:22px;top:396px;width:32px;height:1px;background:#FFFFFF;"></div>
<div class="a" style="left:22px;top:396px;width:1px;height:18px;background:#FFFFFF;"></div>
<div class="a" style="left:22px;top:413px;width:32px;height:1px;background:#000000;"></div>
<div class="a" style="left:53px;top:396px;width:1px;height:18px;background:#000000;"></div>
<div class="a" style="left:22px;top:413px;width:1px;height:1px;background:#FFFFFF;"></div>
<div class="a t" style="left:22px;top:399px;width:32px;text-align:center;font-family:'Liberation Serif',serif;font-size:12px;line-height:12px;color:#000;text-rendering:geometricPrecision;transform:scaleY(1.1);transform-origin:50% 10px">14</div>
<div class="a" style="left:54px;top:413px;width:544px;height:1px;background:#C0C0C0;"></div>
<div class="a" style="left:22px;top:414px;width:32px;height:18px;background:#D4D0C8;"></div>
<div class="a" style="left:22px;top:414px;width:32px;height:1px;background:#FFFFFF;"></div>
<div class="a" style="left:22px;top:414px;width:1px;height:18px;background:#FFFFFF;"></div>
<div class="a" style="left:22px;top:431px;width:32px;height:1px;background:#000000;"></div>
<div class="a" style="left:53px;top:414px;width:1px;height:18px;background:#000000;"></div>
<div class="a" style="left:22px;top:431px;width:1px;height:1px;background:#FFFFFF;"></div>
<div class="a t" style="left:22px;top:417px;width:32px;text-align:center;font-family:'Liberation Serif',serif;font-size:12px;line-height:12px;color:#000;text-rendering:geometricPrecision;transform:scaleY(1.1);transform-origin:50% 10px">15</div>
<div class="a" style="left:54px;top:431px;width:544px;height:1px;background:#C0C0C0;"></div>
<div class="a" style="left:22px;top:432px;width:32px;height:18px;background:#D4D0C8;"></div>
<div class="a" style="left:22px;top:432px;width:32px;height:1px;background:#FFFFFF;"></div>
<div class="a" style="left:22px;top:432px;width:1px;height:18px;background:#FFFFFF;"></div>
<div class="a" style="left:22px;top:449px;width:32px;height:1px;background:#000000;"></div>
<div class="a" style="left:53px;top:432px;width:1px;height:18px;background:#000000;"></div>
<div class="a" style="left:22px;top:449px;width:1px;height:1px;background:#FFFFFF;"></div>
<div class="a t" style="left:22px;top:435px;width:32px;text-align:center;font-family:'Liberation Serif',serif;font-size:12px;line-height:12px;color:#000;text-rendering:geometricPrecision;transform:scaleY(1.1);transform-origin:50% 10px">16</div>
<div class="a" style="left:54px;top:449px;width:544px;height:1px;background:#C0C0C0;"></div>
<div class="a" style="left:121px;top:162px;width:1px;height:288px;background:#C0C0C0;"></div>
<div class="a" style="left:189px;top:162px;width:1px;height:288px;background:#C0C0C0;"></div>
<div class="a" style="left:257px;top:162px;width:1px;height:288px;background:#C0C0C0;"></div>
<div class="a" style="left:325px;top:162px;width:1px;height:288px;background:#C0C0C0;"></div>
<div class="a" style="left:393px;top:162px;width:1px;height:288px;background:#C0C0C0;"></div>
<div class="a" style="left:461px;top:162px;width:1px;height:288px;background:#C0C0C0;"></div>
<div class="a" style="left:529px;top:162px;width:1px;height:288px;background:#C0C0C0;"></div>
<div class="a" style="left:597px;top:162px;width:1px;height:288px;background:#C0C0C0;"></div>
<div class="a" style="left:597px;top:144px;width:1px;height:307px;background:#000000;"></div>
<div class="a" style="left:600px;top:144px;width:16px;height:307px;background:repeating-conic-gradient(#fff 0 25%,#D4D0C8 0 50%) 0 0/2px 2px;"></div>
<div class="a" style="left:600px;top:144px;width:16px;height:16px;background:#D4D0C8;"></div>
<div class="a" style="left:600px;top:144px;width:16px;height:1px;background:#D4D0C8;"></div>
<div class="a" style="left:600px;top:144px;width:1px;height:16px;background:#D4D0C8;"></div>
<div class="a" style="left:601px;top:145px;width:14px;height:1px;background:#FFFFFF;"></div>
<div class="a" style="left:601px;top:145px;width:1px;height:14px;background:#FFFFFF;"></div>
<div class="a" style="left:601px;top:158px;width:14px;height:1px;background:#808080;"></div>
<div class="a" style="left:614px;top:145px;width:1px;height:14px;background:#808080;"></div>
<div class="a" style="left:600px;top:159px;width:16px;height:1px;background:#404040;"></div>
<div class="a" style="left:615px;top:144px;width:1px;height:16px;background:#404040;"></div>
<svg class="a" style="left:600px;top:144px" width="16" height="16" viewBox="0 0 16 16" shape-rendering="crispEdges"><path d="M7 6h1v1h1v1h1v1h1v1h-7v-1h1v-1h1v-1h1z" fill="#000"/></svg>
<div class="a" style="left:600px;top:160px;width:16px;height:16px;background:#D4D0C8;"></div>
<div class="a" style="left:600px;top:160px;width:16px;height:1px;background:#D4D0C8;"></div>
<div class="a" style="left:600px;top:160px;width:1px;height:16px;background:#D4D0C8;"></div>
<div class="a" style="left:601px;top:161px;width:14px;height:1px;background:#FFFFFF;"></div>
<div class="a" style="left:601px;top:161px;width:1px;height:14px;background:#FFFFFF;"></div>
<div class="a" style="left:601px;top:174px;width:14px;height:1px;background:#808080;"></div>
<div class="a" style="left:614px;top:161px;width:1px;height:14px;background:#808080;"></div>
<div class="a" style="left:600px;top:175px;width:16px;height:1px;background:#404040;"></div>
<div class="a" style="left:615px;top:160px;width:1px;height:16px;background:#404040;"></div>
<div class="a" style="left:600px;top:435px;width:16px;height:16px;background:#D4D0C8;"></div>
<div class="a" style="left:600px;top:435px;width:16px;height:1px;background:#D4D0C8;"></div>
<div class="a" style="left:600px;top:435px;width:1px;height:16px;background:#D4D0C8;"></div>
<div class="a" style="left:601px;top:436px;width:14px;height:1px;background:#FFFFFF;"></div>
<div class="a" style="left:601px;top:436px;width:1px;height:14px;background:#FFFFFF;"></div>
<div class="a" style="left:601px;top:449px;width:14px;height:1px;background:#808080;"></div>
<div class="a" style="left:614px;top:436px;width:1px;height:14px;background:#808080;"></div>
<div class="a" style="left:600px;top:450px;width:16px;height:1px;background:#404040;"></div>
<div class="a" style="left:615px;top:435px;width:1px;height:16px;background:#404040;"></div>
<svg class="a" style="left:600px;top:435px" width="16" height="16" viewBox="0 0 16 16" shape-rendering="crispEdges"><path d="M4 6h7v1h-1v1h-1v1h-1v1h-1v-1h-1v-1h-1v-1h-1z" fill="#000"/></svg>
<div class="a" style="left:3px;top:474px;width:1px;height:25px;background:#808080;"></div>
<div class="a" style="left:83px;top:474px;width:1px;height:25px;background:#FFFFFF;"></div>
<div class="a" style="left:3px;top:498px;width:81px;height:1px;background:#FFFFFF;"></div>
<div class="a" style="left:86px;top:474px;width:1px;height:25px;background:#808080;"></div>
<div class="a" style="left:151px;top:474px;width:1px;height:25px;background:#FFFFFF;"></div>
<div class="a" style="left:86px;top:498px;width:66px;height:1px;background:#FFFFFF;"></div>
<div class="a t" style="left:16px;top:480px;font-family:'Liberation Sans',sans-serif;font-size:12px;line-height:12px;font-weight:normal;color:#000;letter-spacing:0.3px">3/11/2013</div>
<div class="a t" style="left:97px;top:480px;font-family:'Liberation Sans',sans-serif;font-size:12px;line-height:12px;font-weight:normal;color:#000;letter-spacing:-0.1px">8:35 PM</div>
<svg class="a" style="left:5px;top:45px" width="16" height="15" viewBox="0 0 16 15" shape-rendering="crispEdges"><rect x="3" y="2" width="8" height="1" fill="#000"/><rect x="11" y="2" width="1" height="1" fill="#fff"/><rect x="3" y="3" width="1" height="1" fill="#000"/><rect x="4" y="3" width="6" height="1" fill="#fff"/><rect x="10" y="3" width="2" height="1" fill="#000"/><rect x="12" y="3" width="1" height="1" fill="#fff"/><rect x="3" y="4" width="1" height="1" fill="#000"/><rect x="4" y="4" width="6" height="1" fill="#fff"/><rect x="10" y="4" width="1" height="1" fill="#000"/><rect x="11" y="4" width="1" height="1" fill="#fff"/><rect x="12" y="4" width="1" height="1" fill="#000"/><rect x="13" y="4" width="1" height="1" fill="#fff"/><rect x="3" y="5" width="1" height="1" fill="#000"/><rect x="4" y="5" width="6" height="1" fill="#fff"/><rect x="10" y="5" width="4" height="1" fill="#000"/><rect x="3" y="6" width="1" height="1" fill="#000"/><rect x="4" y="6" width="9" height="1" fill="#fff"/><rect x="13" y="6" width="1" height="1" fill="#000"/><rect x="3" y="7" width="1" height="1" fill="#000"/><rect x="4" y="7" width="9" height="1" fill="#fff"/><rect x="13" y="7" width="1" height="1" fill="#000"/><rect x="3" y="8" width="1" height="1" fill="#000"/><rect x="4" y="8" width="9" height="1" fill="#fff"/><rect x="13" y="8" width="1" height="1" fill="#000"/><rect x="3" y="9" width="1" height="1" fill="#000"/><rect x="4" y="9" width="9" height="1" fill="#fff"/><rect x="13" y="9" width="1" height="1" fill="#000"/><rect x="3" y="10" width="1" height="1" fill="#000"/><rect x="4" y="10" width="9" height="1" fill="#fff"/><rect x="13" y="10" width="1" height="1" fill="#000"/><rect x="3" y="11" width="1" height="1" fill="#000"/><rect x="4" y="11" width="9" height="1" fill="#fff"/><rect x="13" y="11" width="1" height="1" fill="#000"/><rect x="3" y="12" width="1" height="1" fill="#000"/><rect x="4" y="12" width="9" height="1" fill="#fff"/><rect x="13" y="12" width="1" height="1" fill="#000"/><rect x="3" y="13" width="1" height="1" fill="#000"/><rect x="4" y="13" width="9" height="1" fill="#fff"/><rect x="13" y="13" width="1" height="1" fill="#000"/><rect x="3" y="14" width="11" height="1" fill="#000"/></svg>
<svg class="a" style="left:28px;top:45px" width="17" height="15" viewBox="0 0 17 15" shape-rendering="crispEdges"><rect x="10" y="2" width="3" height="1" fill="#000"/><rect x="9" y="3" width="1" height="1" fill="#000"/><rect x="13" y="3" width="1" height="1" fill="#000"/><rect x="15" y="3" width="1" height="1" fill="#000"/><rect x="14" y="4" width="2" height="1" fill="#000"/><rect x="2" y="5" width="3" height="1" fill="#000"/><rect x="13" y="5" width="3" height="1" fill="#000"/><rect x="1" y="6" width="1" height="1" fill="#000"/><rect x="2" y="6" width="3" height="1" fill="#F2F27A"/><rect x="5" y="6" width="7" height="1" fill="#000"/><rect x="1" y="7" width="1" height="1" fill="#000"/><rect x="2" y="7" width="9" height="1" fill="#F2F27A"/><rect x="11" y="7" width="1" height="1" fill="#000"/><rect x="1" y="8" width="1" height="1" fill="#000"/><rect x="2" y="8" width="9" height="1" fill="#F2F27A"/><rect x="11" y="8" width="1" height="1" fill="#000"/><rect x="1" y="9" width="1" height="1" fill="#000"/><rect x="2" y="9" width="4" height="1" fill="#F2F27A"/><rect x="6" y="9" width="11" height="1" fill="#000"/><rect x="1" y="10" width="1" height="1" fill="#000"/><rect x="2" y="10" width="3" height="1" fill="#F2F27A"/><rect x="5" y="10" width="1" height="1" fill="#000"/><rect x="6" y="10" width="9" height="1" fill="#808000"/><rect x="15" y="10" width="1" height="1" fill="#000"/><rect x="1" y="11" width="1" height="1" fill="#000"/><rect x="2" y="11" width="2" height="1" fill="#F2F27A"/><rect x="4" y="11" width="1" height="1" fill="#000"/><rect x="5" y="11" width="9" height="1" fill="#808000"/><rect x="14" y="11" width="1" height="1" fill="#000"/><rect x="1" y="12" width="1" height="1" fill="#000"/><rect x="2" y="12" width="1" height="1" fill="#F2F27A"/><rect x="3" y="12" width="1" height="1" fill="#000"/><rect x="4" y="12" width="9" height="1" fill="#808000"/><rect x="13" y="12" width="1" height="1" fill="#000"/><rect x="1" y="13" width="2" height="1" fill="#000"/><rect x="3" y="13" width="9" height="1" fill="#808000"/><rect x="12" y="13" width="1" height="1" fill="#000"/><rect x="1" y="14" width="12" height="1" fill="#000"/></svg>
<svg class="a" style="left:52px;top:45px" width="16" height="16" viewBox="0 0 16 16" shape-rendering="crispEdges"><rect x="1" y="2" width="14" height="1" fill="#000"/><rect x="1" y="3" width="1" height="1" fill="#000"/><rect x="2" y="3" width="1" height="1" fill="#808000"/><rect x="3" y="3" width="1" height="1" fill="#000"/><rect x="4" y="3" width="8" height="1" fill="#D8D8D0"/><rect x="12" y="3" width="1" height="1" fill="#000"/><rect x="13" y="3" width="1" height="1" fill="#fff"/><rect x="14" y="3" width="1" height="1" fill="#000"/><rect x="1" y="4" width="1" height="1" fill="#000"/><rect x="2" y="4" width="1" height="1" fill="#808000"/><rect x="3" y="4" width="1" height="1" fill="#000"/><rect x="4" y="4" width="8" height="1" fill="#D8D8D0"/><rect x="12" y="4" width="3" height="1" fill="#000"/><rect x="1" y="5" width="1" height="1" fill="#000"/><rect x="2" y="5" width="1" height="1" fill="#808000"/><rect x="3" y="5" width="1" height="1" fill="#000"/><rect x="4" y="5" width="8" height="1" fill="#D8D8D0"/><rect x="12" y="5" width="1" height="1" fill="#000"/><rect x="13" y="5" width="1" height="1" fill="#808000"/><rect x="14" y="5" width="1" height="1" fill="#000"/><rect x="1" y="6" width="1" height="1" fill="#000"/><rect x="2" y="6" width="1" height="1" fill="#808000"/><rect x="3" y="6" width="1" height="1" fill="#000"/><rect x="4" y="6" width="8" height="1" fill="#D8D8D0"/><rect x="12" y="6" width="1" height="1" fill="#000"/><rect x="13" y="6" width="1" height="1" fill="#808000"/><rect x="14" y="6" width="1" height="1" fill="#000"/><rect x="1" y="7" width="1" height="1" fill="#000"/><rect x="2" y="7" width="1" height="1" fill="#808000"/><rect x="3" y="7" width="1" height="1" fill="#000"/><rect x="4" y="7" width="8" height="1" fill="#D8D8D0"/><rect x="12" y="7" width="1" height="1" fill="#000"/><rect x="13" y="7" width="1" height="1" fill="#808000"/><rect x="14" y="7" width="1" height="1" fill="#000"/><rect x="1" y="8" width="1" height="1" fill="#000"/><rect x="2" y="8" width="1" height="1" fill="#808000"/><rect x="3" y="8" width="1" height="1" fill="#000"/><rect x="4" y="8" width="8" height="1" fill="#D8D8D0"/><rect x="12" y="8" width="1" height="1" fill="#000"/><rect x="13" y="8" width="1" height="1" fill="#808000"/><rect x="14" y="8" width="1" height="1" fill="#000"/><rect x="1" y="9" width="1" height="1" fill="#000"/><rect x="2" y="9" width="1" height="1" fill="#808000"/><rect x="3" y="9" width="10" height="1" fill="#000"/><rect x="13" y="9" width="1" height="1" fill="#808000"/><rect x="14" y="9" width="1" height="1" fill="#000"/><rect x="1" y="10" width="1" height="1" fill="#000"/><rect x="2" y="10" width="12" height="1" fill="#808000"/><rect x="14" y="10" width="1" height="1" fill="#000"/><rect x="1" y="11" width="1" height="1" fill="#000"/><rect x="2" y="11" width="2" height="1" fill="#808000"/><rect x="4" y="11" width="8" height="1" fill="#000"/><rect x="12" y="11" width="2" height="1" fill="#808000"/><rect x="14" y="11" width="1" height="1" fill="#000"/><rect x="1" y="12" width="1" height="1" fill="#000"/><rect x="2" y="12" width="2" height="1" fill="#808000"/><rect x="4" y="12" width="6" height="1" fill="#000"/><rect x="10" y="12" width="2" height="1" fill="#fff"/><rect x="12" y="12" width="2" height="1" fill="#808000"/><rect x="14" y="12" width="1" height="1" fill="#000"/><rect x="1" y="13" width="1" height="1" fill="#000"/><rect x="2" y="13" width="2" height="1" fill="#808000"/><rect x="4" y="13" width="6" height="1" fill="#000"/><rect x="10" y="13" width="2" height="1" fill="#fff"/><rect x="12" y="13" width="2" height="1" fill="#808000"/><rect x="14" y="13" width="1" height="1" fill="#000"/><rect x="1" y="14" width="1" height="1" fill="#000"/><rect x="2" y="14" width="2" height="1" fill="#808000"/><rect x="4" y="14" width="6" height="1" fill="#000"/><rect x="10" y="14" width="2" height="1" fill="#fff"/><rect x="12" y="14" width="2" height="1" fill="#808000"/><rect x="14" y="14" width="1" height="1" fill="#000"/><rect x="2" y="15" width="13" height="1" fill="#000"/></svg>
<svg class="a" style="left:74px;top:45px" width="17" height="16" viewBox="0 0 17 16" shape-rendering="crispEdges"><rect x="6" y="2" width="9" height="1" fill="#000"/><rect x="5" y="3" width="1" height="1" fill="#000"/><rect x="6" y="3" width="7" height="1" fill="#fff"/><rect x="13" y="3" width="2" height="1" fill="#000"/><rect x="5" y="4" width="1" height="1" fill="#000"/><rect x="6" y="4" width="1" height="1" fill="#fff"/><rect x="7" y="4" width="5" height="1" fill="#000"/><rect x="12" y="4" width="1" height="1" fill="#fff"/><rect x="13" y="4" width="1" height="1" fill="#000"/><rect x="4" y="5" width="1" height="1" fill="#000"/><rect x="5" y="5" width="7" height="1" fill="#fff"/><rect x="12" y="5" width="1" height="1" fill="#000"/><rect x="4" y="6" width="1" height="1" fill="#000"/><rect x="5" y="6" width="1" height="1" fill="#fff"/><rect x="6" y="6" width="5" height="1" fill="#000"/><rect x="11" y="6" width="1" height="1" fill="#fff"/><rect x="12" y="6" width="1" height="1" fill="#000"/><rect x="13" y="6" width="1" height="1" fill="#fff"/><rect x="14" y="6" width="1" height="1" fill="#000"/><rect x="3" y="7" width="1" height="1" fill="#000"/><rect x="4" y="7" width="8" height="1" fill="#fff"/><rect x="12" y="7" width="1" height="1" fill="#000"/><rect x="13" y="7" width="1" height="1" fill="#fff"/><rect x="14" y="7" width="1" height="1" fill="#000"/><rect x="15" y="7" width="1" height="1" fill="#fff"/><rect x="2" y="8" width="11" height="1" fill="#000"/><rect x="13" y="8" width="1" height="1" fill="#fff"/><rect x="14" y="8" width="1" height="1" fill="#000"/><rect x="15" y="8" width="1" height="1" fill="#fff"/><rect x="16" y="8" width="1" height="1" fill="#000"/><rect x="1" y="9" width="1" height="1" fill="#000"/><rect x="2" y="9" width="11" height="1" fill="#fff"/><rect x="13" y="9" width="1" height="1" fill="#000"/><rect x="14" y="9" width="1" height="1" fill="#fff"/><rect x="15" y="9" width="1" height="1" fill="#000"/><rect x="1" y="10" width="12" height="1" fill="#000"/><rect x="13" y="10" width="1" height="1" fill="#fff"/><rect x="14" y="10" width="1" height="1" fill="#000"/><rect x="15" y="10" width="1" height="1" fill="#fff"/><rect x="16" y="10" width="1" height="1" fill="#000"/><rect x="1" y="11" width="1" height="1" fill="#000"/><rect x="2" y="11" width="6" height="1" fill="#fff"/><rect x="8" y="11" width="3" height="1" fill="#F2F27A"/><rect x="11" y="11" width="2" height="1" fill="#fff"/><rect x="13" y="11" width="1" height="1" fill="#000"/><rect x="14" y="11" width="1" height="1" fill="#fff"/><rect x="15" y="11" width="1" height="1" fill="#000"/><rect x="1" y="12" width="1" height="1" fill="#000"/><rect x="2" y="12" width="6" height="1" fill="#fff"/><rect x="8" y="12" width="3" height="1" fill="#F2F27A"/><rect x="11" y="12" width="2" height="1" fill="#fff"/><rect x="13" y="12" width="2" height="1" fill="#000"/><rect x="1" y="13" width="12" height="1" fill="#000"/><rect x="13" y="13" width="1" height="1" fill="#fff"/><rect x="14" y="13" width="1" height="1" fill="#000"/><rect x="2" y="14" width="1" height="1" fill="#000"/><rect x="3" y="14" width="10" height="1" fill="#fff"/><rect x="13" y="14" width="2" height="1" fill="#000"/><rect x="3" y="15" width="10" height="1" fill="#000"/></svg>
<svg class="a" style="left:105px;top:45px" width="17" height="15" viewBox="0 0 17 15" shape-rendering="crispEdges"><rect x="8" y="3" width="7" height="1" fill="#000"/><rect x="7" y="4" width="1" height="1" fill="#000"/><rect x="8" y="4" width="7" height="1" fill="#fff"/><rect x="15" y="4" width="1" height="1" fill="#000"/><rect x="3" y="5" width="1" height="1" fill="#000"/><rect x="7" y="5" width="1" height="1" fill="#000"/><rect x="8" y="5" width="1" height="1" fill="#fff"/><rect x="9" y="5" width="5" height="1" fill="#0000FF"/><rect x="14" y="5" width="1" height="1" fill="#fff"/><rect x="15" y="5" width="1" height="1" fill="#000"/><rect x="3" y="6" width="2" height="1" fill="#000"/><rect x="7" y="6" width="1" height="1" fill="#000"/><rect x="8" y="6" width="1" height="1" fill="#fff"/><rect x="9" y="6" width="1" height="1" fill="#0000FF"/><rect x="10" y="6" width="2" height="1" fill="#60A0FF"/><rect x="12" y="6" width="2" height="1" fill="#0000FF"/><rect x="14" y="6" width="1" height="1" fill="#fff"/><rect x="15" y="6" width="1" height="1" fill="#000"/><rect x="1" y="7" width="5" height="1" fill="#000"/><rect x="7" y="7" width="1" height="1" fill="#000"/><rect x="8" y="7" width="1" height="1" fill="#fff"/><rect x="9" y="7" width="5" height="1" fill="#0000FF"/><rect x="14" y="7" width="1" height="1" fill="#fff"/><rect x="15" y="7" width="1" height="1" fill="#000"/><rect x="3" y="8" width="2" height="1" fill="#000"/><rect x="7" y="8" width="1" height="1" fill="#000"/><rect x="8" y="8" width="1" height="1" fill="#fff"/><rect x="9" y="8" width="5" height="1" fill="#0000FF"/><rect x="14" y="8" width="1" height="1" fill="#fff"/><rect x="15" y="8" width="1" height="1" fill="#000"/><rect x="3" y="9" width="1" height="1" fill="#000"/><rect x="7" y="9" width="1" height="1" fill="#000"/><rect x="8" y="9" width="7" height="1" fill="#fff"/><rect x="15" y="9" width="1" height="1" fill="#000"/><rect x="7" y="10" width="9" height="1" fill="#000"/><rect x="6" y="11" width="1" height="1" fill="#000"/><rect x="7" y="11" width="9" height="1" fill="#fff"/><rect x="16" y="11" width="1" height="1" fill="#000"/><rect x="6" y="12" width="1" height="1" fill="#000"/><rect x="7" y="12" width="1" height="1" fill="#fff"/><rect x="8" y="12" width="2" height="1" fill="#00C000"/><rect x="10" y="12" width="2" height="1" fill="#fff"/><rect x="12" y="12" width="3" height="1" fill="#000"/><rect x="15" y="12" width="1" height="1" fill="#fff"/><rect x="16" y="12" width="1" height="1" fill="#000"/><rect x="6" y="13" width="1" height="1" fill="#000"/><rect x="7" y="13" width="9" height="1" fill="#fff"/><rect x="16" y="13" width="1" height="1" fill="#000"/><rect x="7" y="14" width="9" height="1" fill="#000"/></svg>
<svg class="a" style="left:127px;top:45px" width="17" height="17" viewBox="0 0 17 17" shape-rendering="crispEdges"><rect x="8" y="1" width="1" height="1" fill="#000"/><rect x="8" y="2" width="1" height="1" fill="#000"/><rect x="8" y="3" width="1" height="1" fill="#000"/><rect x="8" y="4" width="2" height="1" fill="#000"/><rect x="8" y="5" width="1" height="1" fill="#000"/><rect x="13" y="5" width="3" height="1" fill="#000"/><rect x="4" y="6" width="1" height="1" fill="#000"/><rect x="9" y="6" width="8" height="1" fill="#000"/><rect x="4" y="7" width="2" height="1" fill="#000"/><rect x="9" y="7" width="1" height="1" fill="#000"/><rect x="10" y="7" width="5" height="1" fill="#33998A"/><rect x="15" y="7" width="2" height="1" fill="#000"/><rect x="2" y="8" width="5" height="1" fill="#000"/><rect x="9" y="8" width="1" height="1" fill="#000"/><rect x="10" y="8" width="5" height="1" fill="#33998A"/><rect x="15" y="8" width="2" height="1" fill="#000"/><rect x="4" y="9" width="2" height="1" fill="#000"/><rect x="9" y="9" width="8" height="1" fill="#000"/><rect x="4" y="10" width="1" height="1" fill="#000"/><rect x="9" y="10" width="8" height="1" fill="#000"/><rect x="9" y="11" width="8" height="1" fill="#000"/><rect x="9" y="12" width="1" height="1" fill="#000"/><rect x="10" y="12" width="2" height="1" fill="#fff"/><rect x="12" y="12" width="1" height="1" fill="#000"/><rect x="13" y="12" width="2" height="1" fill="#fff"/><rect x="15" y="12" width="2" height="1" fill="#000"/><rect x="9" y="13" width="8" height="1" fill="#000"/><rect x="9" y="14" width="1" height="1" fill="#000"/><rect x="10" y="14" width="2" height="1" fill="#fff"/><rect x="12" y="14" width="1" height="1" fill="#000"/><rect x="13" y="14" width="2" height="1" fill="#fff"/><rect x="15" y="14" width="2" height="1" fill="#000"/><rect x="9" y="15" width="8" height="1" fill="#000"/><rect x="9" y="16" width="8" height="1" fill="#000"/></svg>
<svg class="a" style="left:159px;top:45px" width="14" height="15" viewBox="0 0 14 15" shape-rendering="crispEdges"><rect x="6" y="2" width="6" height="1" fill="#000"/><rect x="5" y="3" width="1" height="1" fill="#000"/><rect x="6" y="3" width="6" height="1" fill="#FFFF00"/><rect x="12" y="3" width="1" height="1" fill="#000"/><rect x="4" y="4" width="1" height="1" fill="#000"/><rect x="5" y="4" width="2" height="1" fill="#FFFF00"/><rect x="7" y="4" width="3" height="1" fill="#000"/><rect x="10" y="4" width="3" height="1" fill="#FFFF00"/><rect x="13" y="4" width="1" height="1" fill="#000"/><rect x="4" y="5" width="1" height="1" fill="#000"/><rect x="5" y="5" width="2" height="1" fill="#FFFF00"/><rect x="7" y="5" width="1" height="1" fill="#000"/><rect x="8" y="5" width="1" height="1" fill="#fff"/><rect x="9" y="5" width="1" height="1" fill="#000"/><rect x="10" y="5" width="3" height="1" fill="#FFFF00"/><rect x="13" y="5" width="1" height="1" fill="#000"/><rect x="4" y="6" width="1" height="1" fill="#000"/><rect x="5" y="6" width="2" height="1" fill="#FFFF00"/><rect x="7" y="6" width="2" height="1" fill="#000"/><rect x="9" y="6" width="4" height="1" fill="#FFFF00"/><rect x="13" y="6" width="1" height="1" fill="#000"/><rect x="5" y="7" width="3" height="1" fill="#000"/><rect x="8" y="7" width="4" height="1" fill="#FFFF00"/><rect x="12" y="7" width="1" height="1" fill="#000"/><rect x="7" y="8" width="1" height="1" fill="#000"/><rect x="8" y="8" width="3" height="1" fill="#FFFF00"/><rect x="11" y="8" width="1" height="1" fill="#000"/><rect x="7" y="9" width="1" height="1" fill="#000"/><rect x="8" y="9" width="2" height="1" fill="#FFFF00"/><rect x="10" y="9" width="1" height="1" fill="#000"/><rect x="7" y="10" width="1" height="1" fill="#000"/><rect x="8" y="10" width="2" height="1" fill="#FFFF00"/><rect x="10" y="10" width="1" height="1" fill="#000"/><rect x="8" y="11" width="2" height="1" fill="#000"/><rect x="7" y="12" width="4" height="1" fill="#000"/><rect x="7" y="13" width="1" height="1" fill="#000"/><rect x="8" y="13" width="2" height="1" fill="#FFFF00"/><rect x="10" y="13" width="1" height="1" fill="#000"/><rect x="8" y="14" width="2" height="1" fill="#000"/></svg>
<svg class="a" style="left:5px;top:4px" width="16" height="16" viewBox="0 0 16 16" shape-rendering="crispEdges"><rect x="0" y="0" width="10" height="1" fill="#fff"/><rect x="10" y="0" width="1" height="1" fill="#000"/><rect x="11" y="0" width="5" height="1" fill="#fff"/><rect x="0" y="1" width="10" height="1" fill="#fff"/><rect x="10" y="1" width="1" height="1" fill="#000"/><rect x="11" y="1" width="5" height="1" fill="#fff"/><rect x="0" y="2" width="9" height="1" fill="#fff"/><rect x="9" y="2" width="1" height="1" fill="#000"/><rect x="10" y="2" width="6" height="1" fill="#fff"/><rect x="0" y="3" width="9" height="1" fill="#fff"/><rect x="9" y="3" width="1" height="1" fill="#000"/><rect x="10" y="3" width="2" height="1" fill="#fff"/><rect x="12" y="3" width="1" height="1" fill="#000"/><rect x="13" y="3" width="3" height="1" fill="#fff"/><rect x="0" y="4" width="7" height="1" fill="#fff"/><rect x="7" y="4" width="1" height="1" fill="#808080"/><rect x="8" y="4" width="1" height="1" fill="#000"/><rect x="9" y="4" width="1" height="1" fill="#808080"/><rect x="10" y="4" width="1" height="1" fill="#C0C0C0"/><rect x="11" y="4" width="1" height="1" fill="#808080"/><rect x="12" y="4" width="1" height="1" fill="#000"/><rect x="13" y="4" width="3" height="1" fill="#fff"/><rect x="0" y="5" width="6" height="1" fill="#fff"/><rect x="6" y="5" width="1" height="1" fill="#808080"/><rect x="7" y="5" width="1" height="1" fill="#C0C0C0"/><rect x="8" y="5" width="1" height="1" fill="#808080"/><rect x="9" y="5" width="1" height="1" fill="#C0C0C0"/><rect x="10" y="5" width="1" height="1" fill="#808080"/><rect x="11" y="5" width="1" height="1" fill="#C0C0C0"/><rect x="12" y="5" width="1" height="1" fill="#000"/><rect x="13" y="5" width="3" height="1" fill="#fff"/><rect x="0" y="6" width="5" height="1" fill="#fff"/><rect x="5" y="6" width="1" height="1" fill="#000"/><rect x="6" y="6" width="1" height="1" fill="#C0C0C0"/><rect x="7" y="6" width="1" height="1" fill="#808080"/><rect x="8" y="6" width="1" height="1" fill="#C0C0C0"/><rect x="9" y="6" width="1" height="1" fill="#808080"/><rect x="10" y="6" width="1" height="1" fill="#C0C0C0"/><rect x="11" y="6" width="1" height="1" fill="#000"/><rect x="12" y="6" width="4" height="1" fill="#fff"/><rect x="0" y="7" width="5" height="1" fill="#fff"/><rect x="5" y="7" width="1" height="1" fill="#000"/><rect x="6" y="7" width="5" height="1" fill="#00E000"/><rect x="11" y="7" width="1" height="1" fill="#000"/><rect x="12" y="7" width="4" height="1" fill="#fff"/><rect x="0" y="8" width="4" height="1" fill="#fff"/><rect x="4" y="8" width="1" height="1" fill="#000"/><rect x="5" y="8" width="6" height="1" fill="#00E000"/><rect x="11" y="8" width="1" height="1" fill="#000"/><rect x="12" y="8" width="4" height="1" fill="#fff"/><rect x="0" y="9" width="4" height="1" fill="#fff"/><rect x="4" y="9" width="1" height="1" fill="#000"/><rect x="5" y="9" width="6" height="1" fill="#00E000"/><rect x="11" y="9" width="1" height="1" fill="#000"/><rect x="12" y="9" width="4" height="1" fill="#fff"/><rect x="0" y="10" width="4" height="1" fill="#fff"/><rect x="4" y="10" width="7" height="1" fill="#000"/><rect x="11" y="10" width="5" height="1" fill="#fff"/><rect x="0" y="11" width="3" height="1" fill="#fff"/><rect x="3" y="11" width="1" height="1" fill="#000"/><rect x="4" y="11" width="1" height="1" fill="#fff"/><rect x="5" y="11" width="1" height="1" fill="#000"/><rect x="6" y="11" width="1" height="1" fill="#fff"/><rect x="7" y="11" width="1" height="1" fill="#000"/><rect x="8" y="11" width="1" height="1" fill="#fff"/><rect x="9" y="11" width="1" height="1" fill="#000"/><rect x="10" y="11" width="6" height="1" fill="#fff"/><rect x="0" y="12" width="3" height="1" fill="#fff"/><rect x="3" y="12" width="2" height="1" fill="#000"/><rect x="5" y="12" width="1" height="1" fill="#fff"/><rect x="6" y="12" width="1" height="1" fill="#000"/><rect x="7" y="12" width="1" height="1" fill="#fff"/><rect x="8" y="12" width="2" height="1" fill="#000"/><rect x="10" y="12" width="6" height="1" fill="#fff"/><rect x="0" y="13" width="2" height="1" fill="#fff"/><rect x="2" y="13" width="1" height="1" fill="#000"/><rect x="3" y="13" width="1" height="1" fill="#fff"/><rect x="4" y="13" width="1" height="1" fill="#000"/><rect x="5" y="13" width="1" height="1" fill="#fff"/><rect x="6" y="13" width="1" height="1" fill="#000"/><rect x="7" y="13" width="1" height="1" fill="#fff"/><rect x="8" y="13" width="1" height="1" fill="#000"/><rect x="9" y="13" width="7" height="1" fill="#fff"/><rect x="0" y="14" width="2" height="1" fill="#fff"/><rect x="2" y="14" width="2" height="1" fill="#000"/><rect x="4" y="14" width="1" height="1" fill="#fff"/><rect x="5" y="14" width="1" height="1" fill="#000"/><rect x="6" y="14" width="1" height="1" fill="#fff"/><rect x="7" y="14" width="2" height="1" fill="#000"/><rect x="9" y="14" width="7" height="1" fill="#fff"/><rect x="0" y="15" width="3" height="1" fill="#fff"/><rect x="3" y="15" width="5" height="1" fill="#000"/><rect x="8" y="15" width="8" height="1" fill="#fff"/></svg>
</body></html>
